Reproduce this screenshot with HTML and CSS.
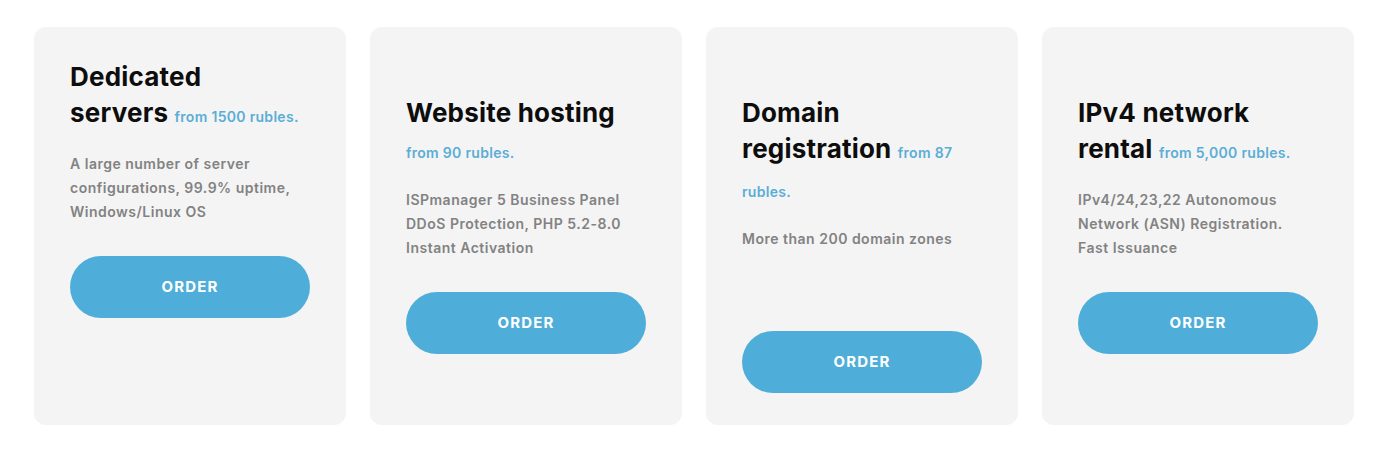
FILE: index.html
```html
<!DOCTYPE html>
<html lang="en">
<head>
<meta charset="utf-8">
<title>Services</title>
<link rel="stylesheet" href="styles.css">
</head>
<body>
<main class="services">
  <article class="card card--first">
    <h2 class="card__title">Dedicated servers <span class="card__price">from 1500 rubles.</span></h2>
    <p class="card__text">A large number of server configurations, 99.9% uptime, Windows/Linux OS</p>
    <a class="card__btn" href="#">ORDER</a>
  </article>
  <article class="card">
    <h2 class="card__title">Website hosting <span class="card__price">from 90 rubles.</span></h2>
    <p class="card__text">ISPmanager 5 Business Panel DDoS Protection, PHP 5.2-8.0 Instant Activation</p>
    <a class="card__btn" href="#">ORDER</a>
  </article>
  <article class="card">
    <h2 class="card__title">Domain registration <span class="card__price">from 87 rubles.</span></h2>
    <p class="card__text">More than 200 domain zones</p>
    <a class="card__btn" href="#">ORDER</a>
  </article>
  <article class="card">
    <h2 class="card__title">IPv4 network rental <span class="card__price">from 5,000 rubles.</span></h2>
    <p class="card__text">IPv4/24,23,22 Autonomous Network (ASN) Registration. Fast Issuance</p>
    <a class="card__btn" href="#">ORDER</a>
  </article>
</main>
</body>
</html>
```

FILE: styles.css
```css
* { box-sizing: border-box; }

body {
  margin: 0;
  background: #ffffff;
  font-family: Inter, "Noto Sans", sans-serif;
}

.services {
  display: flex;
  align-items: stretch;
  gap: 24px;
  padding: 27px 0 0 34px;
}

.card {
  width: 312px;
  flex: 0 0 312px;
  background: #f4f4f4;
  border-radius: 12px;
  padding: 68px 36px 32px 36px;
  display: flex;
  flex-direction: column;
  align-items: flex-start;
}

.card--first {
  padding-top: 32px;
}

.card__title {
  margin: 0;
  max-width: 233px;
  font-size: 26px;
  line-height: 36px;
  font-weight: 700;
  color: #0d0d0d;
  letter-spacing: 0.2px;
}

.card__price {
  font-size: 14px;
  line-height: 34px;
  font-weight: 600;
  color: #5aaed6;
  letter-spacing: 0.3px;
}

.card__text {
  margin: 17.5px 0 32px 0;
  max-width: 236px;
  min-height: 72px;
  font-size: 14px;
  line-height: 24px;
  font-weight: 600;
  color: #828282;
  letter-spacing: 0.5px;
}

.card__btn {
  display: flex;
  align-items: center;
  justify-content: center;
  width: 240px;
  height: 62px;
  border-radius: 31px;
  background: #4faed9;
  color: #ffffff;
  font-size: 15px;
  font-weight: 700;
  letter-spacing: 1.2px;
  text-decoration: none;
}
```
